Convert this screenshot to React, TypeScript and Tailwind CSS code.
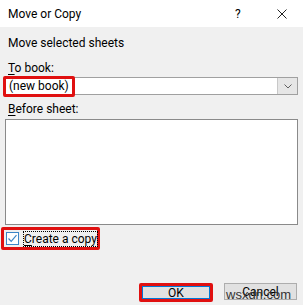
export default function App() {
  return (
    <div className="w-[303px] h-[305px] bg-[#f0f0f0] flex flex-col relative overflow-hidden text-[12px] text-black font-['Roboto',sans-serif]">
      <div className="h-[27px] bg-white flex items-center pl-[8px] shrink-0">
        <span className="flex-1 text-[12px] leading-[16px]">Move or Copy</span>
        <span className="w-[8px] text-[12px] leading-[16px] mr-[34px]">?</span>
        <svg width="10" height="10" viewBox="0 0 10 10" className="mr-[16px]">
          <path d="M0.5 0.5 L9.5 9.5 M9.5 0.5 L0.5 9.5" stroke="#222" strokeWidth="1" />
        </svg>
      </div>
      <div className="px-[5px] flex flex-col">
        <div className="pl-[3px] mt-[8px] leading-[16px] whitespace-nowrap">Move selected sheets</div>
        <div className="pl-[3px] mt-[9px] leading-[16px] whitespace-nowrap">
          <span className="underline underline-offset-2">T</span>o book:
        </div>
        <div className="relative mt-[1px] h-[18px] bg-white border border-[#a0a0a0] flex">
          <span className="flex-1 pl-[3px] leading-[16px] whitespace-nowrap">(new book)</span>
          <div className="w-[20px] bg-[#e6e6e6] border-l border-[#c8c8c8] flex items-center justify-center">
            <svg width="8" height="5" viewBox="0 0 8 5">
              <path d="M0.5 0.5 L4 4 L7.5 0.5" stroke="#606060" strokeWidth="1" fill="none" />
            </svg>
          </div>
          <div className="absolute left-[-3px] top-[-2px] w-[72px] h-[21px] border-[3px] border-[#e01010] rounded-[2px]" />
        </div>
        <div className="pl-[3px] mt-[6px] leading-[16px] whitespace-nowrap">
          <span className="underline underline-offset-2">B</span>efore sheet:
        </div>
        <div className="mt-[2px] h-[106px] bg-white border border-[#8a8a8a]" />
        <div className="mt-[2px] ml-[-4px] w-[99px] h-[23px] border-[3px] border-[#e01010] rounded-[2px] flex items-center pl-[2px]">
          <div className="w-[13px] h-[13px] shrink-0 bg-white border border-[#3d86c6] flex items-center justify-center">
            <svg width="11" height="11" viewBox="0 0 11 11">
              <path d="M1.5 5.5 L4.2 8.3 L9.5 2.2" stroke="#3d86c6" strokeWidth="1.2" fill="none" />
            </svg>
          </div>
          <div className="ml-[4px] border border-dotted border-black leading-[14px] whitespace-nowrap">
            <span className="underline underline-offset-2">C</span>reate a copy
          </div>
        </div>
        <div className="mt-[33px] flex justify-end gap-[11px] pr-[1px]">
          <div className="relative w-[74px] h-[19px] border-[3px] border-[#e01010] rounded-[2px] flex">
            <div className="flex-1 bg-[#e1e1e1] border border-[#0078d7] flex items-center justify-center leading-[12px]">OK</div>
          </div>
          <div className="w-[73px] h-[17px] bg-[#e1e1e1] border border-[#adadad] flex items-center justify-center leading-[12px]">Cancel</div>
        </div>
      </div>
      <div className="absolute left-[226px] top-[288px] text-[13px] leading-[14px] text-[#333] font-['Liberation_Sans',sans-serif]">wsxdn.com</div>
    </div>
  );
}
